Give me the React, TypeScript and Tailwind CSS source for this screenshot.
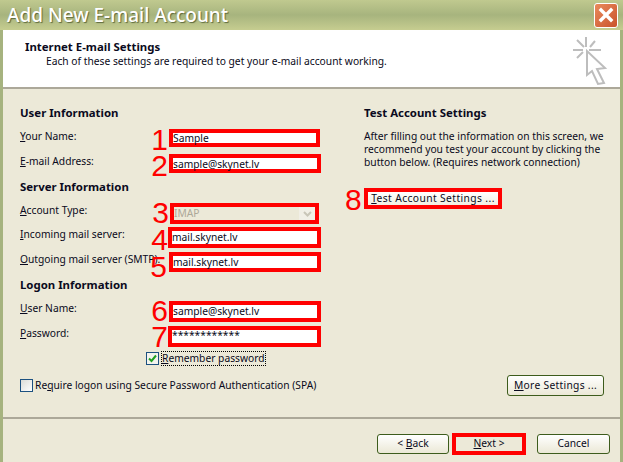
const FONT = "font-['Noto_Sans','DejaVu_Sans',sans-serif]";

function Digit({ n, className }: { n: string; className: string }) {
  return (
    <span className={`absolute right-full font-['Liberation_Sans',sans-serif] text-[30px] leading-none text-[#ff0000] ${className}`}>
      {n}
    </span>
  );
}

function Heading({ children, className }: { children: string; className: string }) {
  return <div className={`h-[14px] text-[11.4px] font-bold leading-[14px] ${className}`}>{children}</div>;
}

function Key({ k, rest }: { k: string; rest: string }) {
  return (
    <span>
      <span className="underline">{k}</span>
      {rest}
    </span>
  );
}

function Row({
  k,
  rest,
  value,
  n,
  className,
  boxClass,
  digitClass,
  valueClass,
  children,
}: {
  k: string;
  rest: string;
  value: string;
  n: string;
  className: string;
  boxClass: string;
  digitClass: string;
  valueClass?: string;
  children?: React.ReactNode;
}) {
  return (
    <div className={`flex items-start ${className}`}>
      <div className="w-[149px] shrink-0 whitespace-nowrap leading-[14px]">
        <Key k={k} rest={rest} />
      </div>
      <div className={`relative flex items-center border-4 border-[#ff0000] bg-white ${boxClass}`}>
        <Digit n={n} className={digitClass} />
        <span className={`whitespace-nowrap leading-none ${valueClass ?? ""}`}>{value}</span>
        {children}
      </div>
    </div>
  );
}

function Btn({ children, className }: { children: React.ReactNode; className: string }) {
  return (
    <div
      className={`flex items-center justify-center rounded-[3px] border border-[#3d5c1c] bg-gradient-to-b from-white to-[#ebe8d6] ${className}`}
    >
      {children}
    </div>
  );
}

function CursorIcon() {
  return (
    <svg width="36" height="52" viewBox="0 0 36 52" fill="none" stroke="#bdbdbd" strokeWidth="2" className="mt-[5px] mr-[11px]">
      <path d="M0 15H10M16 15H28M13 2V12M4 5L11 12M22 6L17 12M4 23L10 17" />
      <path d="M14 16V40L19 36L25 49L31 48L24 34L32 33Z" />
    </svg>
  );
}

export default function App() {
  return (
    <div className={`flex h-[462px] w-[623px] flex-col overflow-hidden bg-[#ece9d8] text-[10.25px] text-[#0a0a20] ${FONT}`}>
      {/* title bar */}
      <div className="flex h-[30px] shrink-0 items-center justify-between bg-gradient-to-b from-[#c0c98f] via-[#a7b47e] to-[#c6cd90] pr-[5px] pl-[7px]">
        <span className="text-[19px] leading-none font-medium text-white [text-shadow:1px_1px_1px_#5e6a3c]">
          Add New E-mail Account
        </span>
        <div className="flex h-[25px] w-[24px] items-center justify-center rounded-[3px] border border-white bg-gradient-to-br from-[#e98a5c] to-[#c9522c]">
          <svg width="16" height="16" viewBox="0 0 16 16" stroke="white" strokeWidth="3.4" strokeLinecap="square">
            <path d="M3 3L13 13M13 3L3 13" />
          </svg>
        </div>
      </div>

      <div className="flex min-h-0 flex-1 flex-col border-x-[3px] border-x-[#a6b37f]">
        {/* header */}
        <div className="flex h-[59px] shrink-0 items-start justify-between border-b-2 border-[#aca899] bg-white">
          <div className="pt-[10px] pl-[22px]">
            <div className="h-[14px] text-[11.4px] font-bold leading-[14px]">Internet E-mail Settings</div>
            <div className="pl-[21px] leading-[15px]">Each of these settings are required to get your e-mail account working.</div>
          </div>
          <CursorIcon />
        </div>

        {/* main */}
        <div className="flex min-h-0 flex-1">
          <div className="w-[341px] shrink-0 pl-[17px]">
            <Heading className="mt-[17px]">User Information</Heading>
            <Row className="mt-[9px]" k="Y" rest="our Name:" value="Sample" n="1" valueClass="pt-[1px]" boxClass="h-[18px] w-[151px]" digitClass="mr-[5px] top-[-8px]" />
            <Row className="mt-[7px]" k="E" rest="-mail Address:" value="sample@skynet.lv" n="2" valueClass="pt-[1px]" boxClass="h-[19px] w-[152px]" digitClass="mr-[5px] top-[-7px]" />
            <Heading className="mt-[7px]">Server Information</Heading>
            <Row className="mt-[9px]" k="A" rest="ccount Type:" value="IMAP" n="3" boxClass="ml-[1px] h-[21px] w-[149px] justify-between !bg-[#ece9d8] text-[#aca899]" digitClass="mr-[5px] top-[-9px]">
              <div className="flex h-[13px] w-[16px] items-center justify-center bg-[#f1efe6]">
                <svg width="9" height="6" viewBox="0 0 9 6" fill="none" stroke="#c9c6b8" strokeWidth="2">
                  <path d="M1 1L4.5 4.5L8 1" />
                </svg>
              </div>
            </Row>
            <Row className="mt-[3px]" k="I" rest="ncoming mail server:" value="mail.skynet.lv" n="4" boxClass="ml-[-1px] h-[21px] w-[153px]" digitClass="mr-[4px] top-[-6px]" />
            <Row className="mt-[4px]" k="O" rest="utgoing mail server (SMTP):" value="mail.skynet.lv" n="5" boxClass="h-[20px] w-[152px]" digitClass="mr-[6px] top-[-4px]" />
            <Heading className="mt-[6px]">Logon Information</Heading>
            <Row className="mt-[9px]" k="U" rest="ser Name:" value="sample@skynet.lv" n="6" boxClass="h-[21px] w-[152px]" digitClass="mr-[5px] top-[-9px]" />
            <Row className="mt-[4px]" k="P" rest="assword:" value="************" n="7" valueClass="pb-[2px]" boxClass="ml-[-1px] h-[21px] w-[153px]" digitClass="mr-[4px] top-[-8px]" />
            <div className="mt-[5px] ml-[126px] flex h-[13px] items-center gap-[2px]">
              <div className="flex h-[13px] w-[13px] shrink-0 items-center justify-center border border-[#1c5180] bg-[#f4f4ee]">
                <svg width="9" height="9" viewBox="0 0 9 9" fill="none" stroke="#21a121" strokeWidth="2">
                  <path d="M1 4.5L3.5 7L8 1.5" />
                </svg>
              </div>
              <span className="whitespace-nowrap border border-dotted border-black leading-[13px]">
                <Key k="R" rest="emember password" />
              </span>
            </div>
            <div className="mt-[14px] flex h-[13px] items-center gap-[2px] whitespace-nowrap">
              <div className="h-[13px] w-[13px] shrink-0 border border-[#1c5180] bg-gradient-to-br from-[#dcdcd7] to-white" />
              <span>
                Re<span className="underline">q</span>uire logon using Secure Password Authentication (SPA)
              </span>
            </div>
          </div>

          <div className="flex w-[255px] flex-col items-start pl-[20px]">
            <Heading className="mt-[17px]">Test Account Settings</Heading>
            <p className="mt-[10px] w-[245px] leading-[13px]">
              After filling out the information on this screen, we recommend you test your account by clicking the button below. (Requires network connection)
            </p>
            <div className="relative mt-[19px] flex h-[21px] w-[138px] items-center justify-center border-4 border-[#ff0000] bg-gradient-to-b from-white to-[#f1efe2] tracking-[0.4px]">
              <Digit n="8" className="mr-[6px] top-[-7px]" />
              <Key k="T" rest="est Account Settings ..." />
            </div>
            <Btn className="mt-[166px] ml-[143px] h-[21px] w-[97px] shrink-0 tracking-[0.3px]">
              <span>
                <span className="underline">M</span>ore Settings ...
              </span>
            </Btn>
          </div>
        </div>

        {/* footer */}
        <div className="flex h-[45px] shrink-0 items-start justify-end border-t-2 border-[#aca899] pt-[14px] pr-[10px]">
          <Btn className="mt-[1px] h-[20px] w-[72px]">
            <span>
              &lt; <span className="underline">B</span>ack
            </span>
          </Btn>
          <div className="ml-[3px] flex h-[22px] w-[74px] items-center justify-center border-4 border-[#ff0000]">
            <span>
              <span className="underline">N</span>ext &gt;
            </span>
          </div>
          <Btn className="mt-[1px] ml-[11px] h-[20px] w-[73px]">Cancel</Btn>
        </div>
      </div>
    </div>
  );
}
